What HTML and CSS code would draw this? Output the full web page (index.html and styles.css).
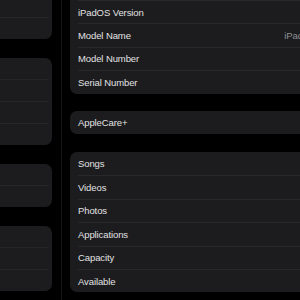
FILE: index.html
```html
<!DOCTYPE html>
<html lang="en">
<head>
  <meta charset="UTF-8">
  <meta name="viewport" content="width=device-width, initial-scale=1.0">
  <title>About</title>
  <link rel="stylesheet" href="styles.css">
</head>
<body>
  <div class="layout">
    <aside class="sidebar">
      <div class="group group-first">
        <div class="side-row"></div>
        <div class="side-row"></div>
        <div class="side-row"></div>
      </div>
      <div class="group">
        <div class="side-row"></div>
        <div class="side-row"></div>
        <div class="side-row"></div>
        <div class="side-row"></div>
      </div>
      <div class="group">
        <div class="side-row"></div>
        <div class="side-row"></div>
      </div>
      <div class="group">
        <div class="side-row"></div>
        <div class="side-row"></div>
        <div class="side-row"></div>
      </div>
    </aside>

    <div class="divider"></div>

    <main class="main">
      <div class="card card-first">
        <div class="row"></div>
        <div class="row"><span class="label">iPadOS Version</span></div>
        <div class="row"><span class="label">Model Name</span><span class="value">iPad Pro</span></div>
        <div class="row"><span class="label">Model Number</span></div>
        <div class="row"><span class="label">Serial Number</span></div>
      </div>

      <div class="card">
        <div class="row"><span class="label">AppleCare+</span></div>
      </div>

      <div class="card">
        <div class="row"><span class="label">Songs</span></div>
        <div class="row"><span class="label">Videos</span></div>
        <div class="row"><span class="label">Photos</span></div>
        <div class="row"><span class="label">Applications</span></div>
        <div class="row"><span class="label">Capacity</span></div>
        <div class="row"><span class="label">Available</span></div>
      </div>
    </main>
  </div>
</body>
</html>
```

FILE: styles.css
```css
body {
  margin: 0;
  padding: 0;
  background-color: #000;
  color: #e2e2e4;
  font-family: "Liberation Sans", Arial, sans-serif;
  width: 300px;
  height: 300px;
  overflow: hidden;
}
.layout {
  display: flex;
  align-items: flex-start;
}
.sidebar {
  width: 62px;
  margin-left: -10px;
  display: flex;
  flex-direction: column;
  gap: 19px;
  flex-shrink: 0;
}
.group {
  background-color: #1c1c1e;
  border-radius: 7px;
}
.group-first {
  margin-top: -26px;
}
.side-row {
  height: 21px;
  margin-right: 3px;
}
.side-row + .side-row {
  border-top: 1px solid #262628;
}
.divider {
  width: 1px;
  height: 300px;
  margin-left: 9px;
  background-color: #161616;
  flex-shrink: 0;
}
.main {
  padding-left: 8px;
  display: flex;
  flex-direction: column;
  gap: 17.5px;
  flex-shrink: 0;
}
.card {
  width: 260px;
  background-color: #1c1c1e;
  border-radius: 7px;
}
.card-first {
  margin-top: -23.4px;
}
.row {
  height: 23.4px;
  margin-left: 8px;
  padding-right: 10px;
  display: flex;
  align-items: center;
  justify-content: space-between;
  font-size: 9.5px;
  letter-spacing: -0.1px;
  box-sizing: border-box;
}
.row + .row {
  border-top: 1px solid #28282a;
}
.value {
  color: #8e8e93;
}
```
